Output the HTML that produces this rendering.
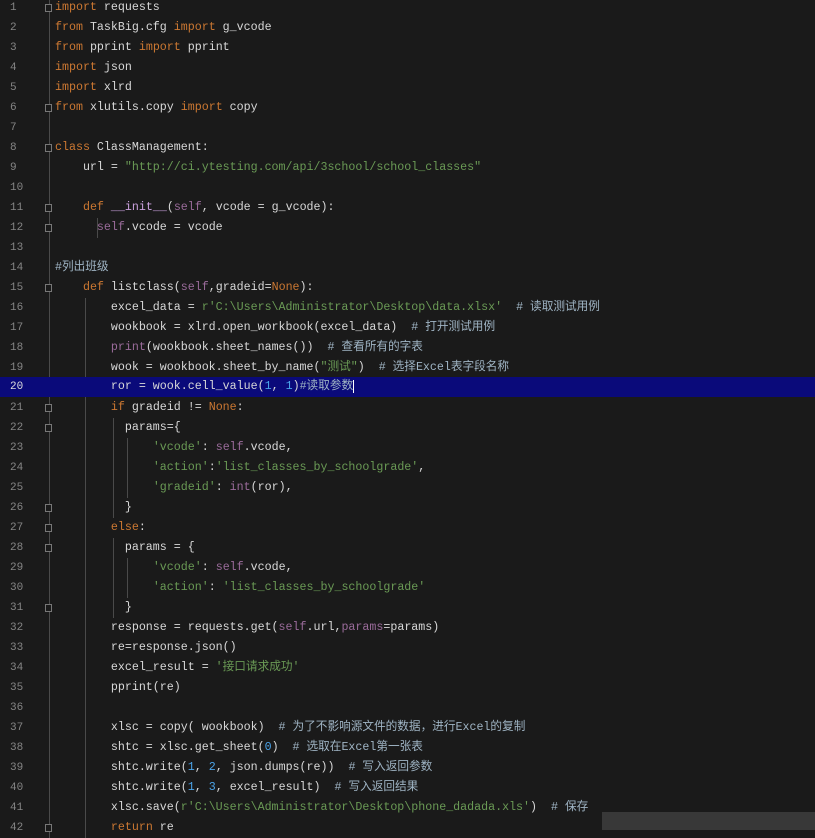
<!DOCTYPE html>
<html><head><meta charset="utf-8"><style>
body{margin:0;width:815px;height:838px;background:#1a1a1a;overflow:hidden;position:relative;font-family:"Liberation Mono","Noto Sans CJK SC",monospace;font-size:11.65px;}
.l{position:absolute;left:0;width:815px;height:20px;line-height:20px;white-space:pre;color:#d8d8d8}
.n{position:absolute;left:10px;color:#858585;font-size:11px}
.c{position:absolute;left:55px}
.k{color:#cc7832}.s{color:#6a9a55}.m{color:#9fb4c4}.f{color:#9a6b9a}.d{color:#4aa3e8}
.sel{background:#0a0a7a}
.g{position:absolute;width:1px;background:#4a4a4a}
.fold{position:absolute;left:45px;width:7px;height:8px;border:1px solid #777;box-sizing:border-box;background:#1a1a1a}
</style></head><body>
<div class="g" style="left:49px;top:0;height:838px"></div>
<div class="g" style="left:97px;top:218px;height:20px"></div>
<div class="g" style="left:85px;top:298px;height:540px"></div>
<div class="g" style="left:113px;top:418px;height:100px"></div>
<div class="g" style="left:127px;top:438px;height:60px"></div>
<div class="g" style="left:113px;top:538px;height:80px"></div>
<div class="g" style="left:127px;top:558px;height:40px"></div>
<div class="l" style="top:-2px"><span class="n">1</span><span class="c"><span class="k">import</span> requests</span></div>
<div class="l" style="top:18px"><span class="n">2</span><span class="c"><span class="k">from</span> TaskBig.cfg <span class="k">import</span> g_vcode</span></div>
<div class="l" style="top:38px"><span class="n">3</span><span class="c"><span class="k">from</span> pprint <span class="k">import</span> pprint</span></div>
<div class="l" style="top:58px"><span class="n">4</span><span class="c"><span class="k">import</span> json</span></div>
<div class="l" style="top:78px"><span class="n">5</span><span class="c"><span class="k">import</span> xlrd</span></div>
<div class="l" style="top:98px"><span class="n">6</span><span class="c"><span class="k">from</span> xlutils.copy <span class="k">import</span> copy</span></div>
<div class="l" style="top:118px"><span class="n">7</span></div>
<div class="l" style="top:138px"><span class="n">8</span><span class="c"><span class="k">class</span> ClassManagement:</span></div>
<div class="l" style="top:158px"><span class="n">9</span><span class="c">    url = <span class="s">"http://ci.ytesting.com/api/3school/school_classes"</span></span></div>
<div class="l" style="top:178px"><span class="n">10</span></div>
<div class="l" style="top:198px"><span class="n">11</span><span class="c">    <span class="k">def</span> <span style="color:#c9a0dc">__init__</span>(<span class="f">self</span>, vcode = g_vcode):</span></div>
<div class="l" style="top:218px"><span class="n">12</span><span class="c">      <span class="f">self</span>.vcode = vcode</span></div>
<div class="l" style="top:238px"><span class="n">13</span></div>
<div class="l" style="top:258px"><span class="n">14</span><span class="c"><span class="m">#列出班级</span></span></div>
<div class="l" style="top:278px"><span class="n">15</span><span class="c">    <span class="k">def</span> listclass(<span class="f">self</span>,gradeid=<span class="k">None</span>):</span></div>
<div class="l" style="top:298px"><span class="n">16</span><span class="c">        excel_data = <span class="s">r'C:\Users\Administrator\Desktop\data.xlsx'</span>  <span class="m"># 读取测试用例</span></span></div>
<div class="l" style="top:318px"><span class="n">17</span><span class="c">        wookbook = xlrd.open_workbook(excel_data)  <span class="m"># 打开测试用例</span></span></div>
<div class="l" style="top:338px"><span class="n">18</span><span class="c">        <span class="f">print</span>(wookbook.sheet_names())  <span class="m"># 查看所有的字表</span></span></div>
<div class="l" style="top:358px"><span class="n">19</span><span class="c">        wook = wookbook.sheet_by_name(<span class="s">"测试"</span>)  <span class="m"># 选择Excel表字段名称</span></span></div>
<div class="l sel" style="top:377px"><span class="n" style="color:#ddd">20</span><span class="c">        ror = wook.cell_value(<span class="d">1</span>, <span class="d">1</span>)<span class="m">#读取参数</span><span style="border-left:1px solid #fff"></span></span></div>
<div class="l" style="top:398px"><span class="n">21</span><span class="c">        <span class="k">if</span> gradeid != <span class="k">None</span>:</span></div>
<div class="l" style="top:418px"><span class="n">22</span><span class="c">          params={</span></div>
<div class="l" style="top:438px"><span class="n">23</span><span class="c">              <span class="s">'vcode'</span>: <span class="f">self</span>.vcode,</span></div>
<div class="l" style="top:458px"><span class="n">24</span><span class="c">              <span class="s">'action'</span>:<span class="s">'list_classes_by_schoolgrade'</span>,</span></div>
<div class="l" style="top:478px"><span class="n">25</span><span class="c">              <span class="s">'gradeid'</span>: <span class="f">int</span>(ror),</span></div>
<div class="l" style="top:498px"><span class="n">26</span><span class="c">          }</span></div>
<div class="l" style="top:518px"><span class="n">27</span><span class="c">        <span class="k">else</span>:</span></div>
<div class="l" style="top:538px"><span class="n">28</span><span class="c">          params = {</span></div>
<div class="l" style="top:558px"><span class="n">29</span><span class="c">              <span class="s">'vcode'</span>: <span class="f">self</span>.vcode,</span></div>
<div class="l" style="top:578px"><span class="n">30</span><span class="c">              <span class="s">'action'</span>: <span class="s">'list_classes_by_schoolgrade'</span></span></div>
<div class="l" style="top:598px"><span class="n">31</span><span class="c">          }</span></div>
<div class="l" style="top:618px"><span class="n">32</span><span class="c">        response = requests.get(<span class="f">self</span>.url,<span class="f">params</span>=params)</span></div>
<div class="l" style="top:638px"><span class="n">33</span><span class="c">        re=response.json()</span></div>
<div class="l" style="top:658px"><span class="n">34</span><span class="c">        excel_result = <span class="s">'接口请求成功'</span></span></div>
<div class="l" style="top:678px"><span class="n">35</span><span class="c">        pprint(re)</span></div>
<div class="l" style="top:698px"><span class="n">36</span></div>
<div class="l" style="top:718px"><span class="n">37</span><span class="c">        xlsc = copy( wookbook)  <span class="m"># 为了不影响源文件的数据，进行Excel的复制</span></span></div>
<div class="l" style="top:738px"><span class="n">38</span><span class="c">        shtc = xlsc.get_sheet(<span class="d">0</span>)  <span class="m"># 选取在Excel第一张表</span></span></div>
<div class="l" style="top:758px"><span class="n">39</span><span class="c">        shtc.write(<span class="d">1</span>, <span class="d">2</span>, json.dumps(re))  <span class="m"># 写入返回参数</span></span></div>
<div class="l" style="top:778px"><span class="n">40</span><span class="c">        shtc.write(<span class="d">1</span>, <span class="d">3</span>, excel_result)  <span class="m"># 写入返回结果</span></span></div>
<div class="l" style="top:798px"><span class="n">41</span><span class="c">        xlsc.save(<span class="s">r'C:\Users\Administrator\Desktop\phone_dadada.xls'</span>)  <span class="m"># 保存</span></span></div>
<div class="l" style="top:818px"><span class="n">42</span><span class="c">        <span class="k">return</span> re</span></div>
<div class="fold" style="top:4px"></div><div class="fold" style="top:104px"></div><div class="fold" style="top:144px"></div>
<div class="fold" style="top:204px"></div><div class="fold" style="top:224px"></div><div class="fold" style="top:284px"></div>
<div class="fold" style="top:404px"></div><div class="fold" style="top:424px"></div><div class="fold" style="top:504px"></div>
<div class="fold" style="top:524px"></div><div class="fold" style="top:544px"></div><div class="fold" style="top:604px"></div>
<div class="fold" style="top:824px"></div>
<div style="position:absolute;left:602px;top:812px;width:213px;height:18px;background:#383838"></div>
</body></html>
